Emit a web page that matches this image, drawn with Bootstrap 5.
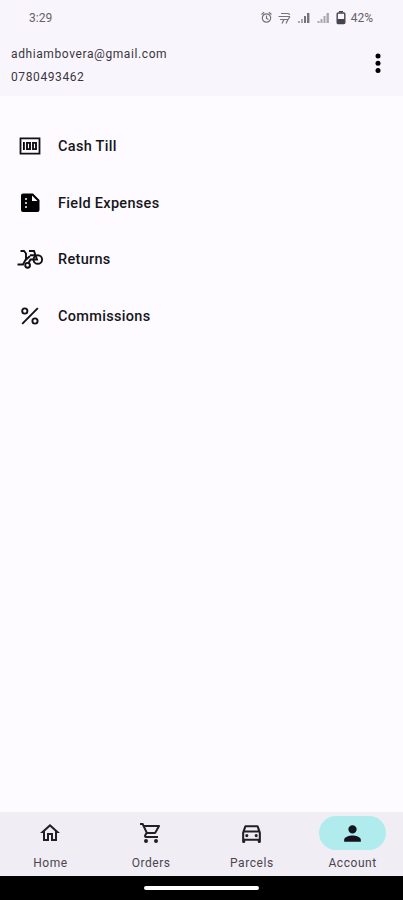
<!DOCTYPE html>
<html lang="en">
<head>
<meta charset="utf-8">
<meta name="viewport" content="width=device-width, initial-scale=1">
<title>Account</title>
<link href="https://cdn.jsdelivr.net/npm/bootstrap@5.3.0/dist/css/bootstrap.min.css" rel="stylesheet">
<style>
body{font-family:Roboto,sans-serif;background:#fdfbff;color:#1b1b1f}
.screen{height:900px;overflow:hidden}
.app-head{height:96px;background:#f9f5fd}
.status{height:36px;padding:0 30px 0 29px;font-size:12px;line-height:36px;color:#65616a}
.status-icons{margin-right:4px}
.battery{margin-right:5px}
.user{padding:7px 18px 0 11px;font-size:12px;line-height:22.5px;letter-spacing:.6px;color:#39363e}
.menu{padding-top:22px}
.menu a{height:56.6px;padding-left:18px;font-size:14.5px;font-weight:500;letter-spacing:.31px;color:#17161a}
.menu a span{padding-top:1px}
.menu svg{width:24px;height:24px;margin-right:16px}
.tabs{height:64px;background:#f1edf4;padding-top:4px}
.tabs a{font-size:12px;line-height:17px;letter-spacing:.55px;color:#49464e}
.pill{width:67px;height:34px;margin-bottom:5px}
.pill.on{background:#b0ecee}
.gesture{height:24px;background:#000}
.gesture span{width:115px;height:4px;background:#fff}
</style>
<script src="https://cdn.jsdelivr.net/npm/bootstrap@5.3.0/dist/js/bootstrap.bundle.min.js"></script>
</head>
<body>
<div class="screen d-flex flex-column">
<header class="app-head">
 <div class="status d-flex align-items-center justify-content-between">
  <span>3:29</span>
  <div class="d-flex align-items-center">
   <svg width="72" height="16" viewBox="0 0 72 16" class="status-icons">
    <g fill="none" stroke="#77737c" stroke-width="1.200"><circle cx="6.500" cy="8" r="4.200"/><path d="M1.500 4.500 4.100 2.300M11.500 4.500 8.900 2.300M6.500 5.500v3l2 1"/><path d="M21 3.500h7l2 1M18.500 6.500H30M20 9.500h4l-2 4M24 9.500h4l-2 4M28 9.500l2-3"/></g>
    <path fill="#aaa6af" d="M38 11h2v2h-2zM41 9h2v4h-2zM57.500 11h2v2h-2zM60.500 9h2v4h-2zM63.500 6h2v7h-2zM66.500 3h2.400v10h-2.400z"/><path fill="#77737c" d="M44 6h2v7h-2zM47 3h2.400v10H47z"/>
   </svg>
   <svg width="10" height="14" viewBox="0 0 10 14" class="battery"><path d="M3 0h4v1.500H3z" fill="#47434b"/><rect x="1.200" y="2" width="7.600" height="10.500" rx="1" fill="none" stroke="#47434b" stroke-width="1.400"/><path d="M1.500 8h7v5h-7z" fill="#47434b"/></svg>
   <span>42%</span>
  </div>
 </div>
 <div class="user d-flex justify-content-between">
  <div>adhiambovera@gmail.com<br>0780493462</div>
  <svg width="14" height="24" viewBox="0 0 14 24" class="mt-2"><g fill="#000"><circle cx="7" cy="5" r="2.500"/><circle cx="7" cy="12.300" r="2.500"/><circle cx="7" cy="19.600" r="2.500"/></g></svg>
 </div>
</header>
<main class="menu flex-grow-1">
 <a class="d-flex align-items-center text-decoration-none" href="#"><svg viewBox="0 0 24 24"><path fill="none" stroke="#111" stroke-width="1.800" d="M2.500 4.300h19v15.400h-19z"/><path d="M5 8h1.800v8H5z"/><path fill="none" stroke="#111" stroke-width="1.900" d="M9 8.900h3v6.200H9zM15 8.900h3v6.200h-3z"/></svg><span>Cash Till</span></a>
 <a class="d-flex align-items-center text-decoration-none" href="#"><svg viewBox="0 0 24 24"><path fill-rule="evenodd" d="M15 2.500H5a2 2 0 0 0-2 2V19a2 2 0 0 0 2 2h14.500a2 2 0 0 0 2-2V9zM8 17a1 1 0 1 1 0-2 1 1 0 0 1 0 2m0-4a1 1 0 1 1 0-2 1 1 0 0 1 0 2m0-4a1 1 0 1 1 0-2 1 1 0 0 1 0 2m6 1V4.500l5.500 5.500z"/></svg><span>Field Expenses</span></a>
 <a class="d-flex align-items-center text-decoration-none" href="#"><svg viewBox="0 0 24 24" class="overflow-visible"><g fill="none" stroke="#111" stroke-width="1.900"><path d="M2.500 4H6l2 2.500V12l-3 5.500H-.5M7 13.500 12 9"/><path d="M11 4h5l3 8.500h-6.500L10 17M12 8.200h5.500"/><circle cx="19.800" cy="12.500" r="4.300"/><circle cx="9.600" cy="18.300" r="2.400"/></g></svg><span>Returns</span></a>
 <a class="d-flex align-items-center text-decoration-none" href="#"><svg viewBox="0 0 24 24"><g fill="none" stroke="#111" stroke-width="1.900"><circle cx="6.800" cy="7" r="2.600"/><circle cx="17" cy="17" r="2.600"/><path d="M19.800 4.200l-15.600 15.600"/></g></svg><span>Commissions</span></a>
</main>
<nav class="tabs d-flex text-center">
 <a class="col-3 d-flex flex-column align-items-center text-decoration-none" href="#"><span class="pill rounded-pill d-flex align-items-center justify-content-center"><svg width="24" height="24" viewBox="0 0 24 24"><path fill="#222026" d="m12 5.690 5 4.500V18h-2v-6H9v6H7v-7.810zM12 3 2 12h3v8h6v-6h2v6h6v-8h3z"/></svg></span>Home</a>
 <a class="col-3 d-flex flex-column align-items-center text-decoration-none" href="#"><span class="pill rounded-pill d-flex align-items-center justify-content-center"><svg width="24" height="24" viewBox="0 0 24 24"><path fill="#222026" d="M15.550 13c.75 0 1.410-.41 1.750-1.030l3.580-6.490A1 1 0 0 0 20.010 4H5.210l-.94-2H1v2h2l3.600 7.590-1.350 2.440C4.520 15.370 5.480 17 7 17h12v-2H7l1.100-2zM6.160 6h12.150l-2.760 5H8.530zM7 18a2 2 0 1 0 0 4 2 2 0 0 0 0-4m10 0a2 2 0 1 0 0 4 2 2 0 0 0 0-4"/></svg></span>Orders</a>
 <a class="col-3 d-flex flex-column align-items-center text-decoration-none" href="#"><span class="pill rounded-pill d-flex align-items-center justify-content-center"><svg width="25" height="25" viewBox="0 0 24 24"><path fill="#222026" fill-rule="evenodd" d="M18.920 5.010A1.500 1.500 0 0 0 17.500 4h-11c-.66 0-1.210.42-1.420 1.010L3 11v9c0 .55.450 1 1 1h1c.55 0 1-.45 1-1v-1h12v1c0 .55.450 1 1 1h1c.55 0 1-.45 1-1v-9zM6.850 6h10.290l1.040 3H5.810zM19 17H5v-6h14zM7.500 12.500a1.500 1.500 0 1 1 0 3 1.500 1.500 0 0 1 0-3m9 0a1.500 1.500 0 1 1 0 3 1.500 1.500 0 0 1 0-3"/></svg></span>Parcels</a>
 <a class="col-3 d-flex flex-column align-items-center text-decoration-none" href="#"><span class="pill on rounded-pill d-flex align-items-center justify-content-center"><svg width="25" height="25" viewBox="0 0 24 24"><path fill="#15131f" d="M12 12a4 4 0 1 0 0-8 4 4 0 0 0 0 8m0 2c-2.670 0-8 1.340-8 4v2h16v-2c0-2.660-5.330-4-8-4"/></svg></span>Account</a>
</nav>
<div class="gesture d-flex align-items-center justify-content-center"><span class="rounded-pill"></span></div>
</div>
</body>
</html>
